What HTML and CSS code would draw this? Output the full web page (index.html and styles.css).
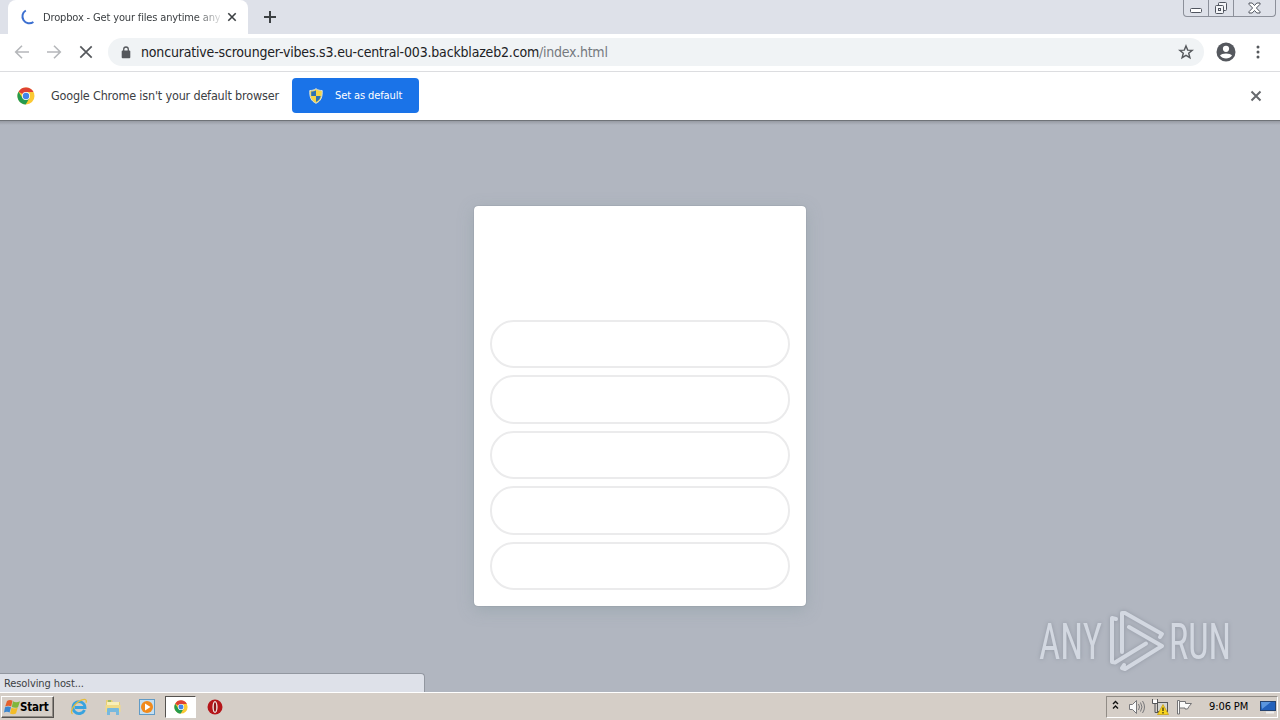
FILE: index.html
```html
<!DOCTYPE html>
<html lang="en">
<head>
  <meta charset="UTF-8" />
  <title>Dropbox - Get your files anytime anywhere</title>
  <link rel="stylesheet" href="styles.css">
</head>
<body>

  <header class="tabstrip">
    <div class="tab">
      <svg class="spinner" width="16" height="16" viewBox="0 0 16 16"><path d="M5.800 1.500A6.900 6.900 0 1 0 13.400 13" fill="none" stroke="#3b6fd0" stroke-width="2"/></svg>
      <span class="tab-title">Dropbox - Get your files anytime any</span>
      <svg width="10" height="10" viewBox="0 0 10 10"><path d="M1.3 1.3l7.4 7.4M8.7 1.3L1.3 8.7" stroke="#3c4043" stroke-width="1.6"/></svg>
    </div>
    <svg class="new-tab" width="12" height="12" viewBox="0 0 12 12"><path d="M6 0v12M0 6h12" stroke="#3c4043" stroke-width="2"/></svg>
    <div class="window-buttons">
      <span class="win min"><svg width="12" height="5" viewBox="0 0 12 5"><rect x=".5" y=".5" width="11" height="4" rx="1" fill="#fff" stroke="#50555f"/></svg></span>
      <span class="win"><svg width="14" height="14" viewBox="0 0 14 14" fill="#f4f5f8" stroke="#50555f"><rect x="4.500" y="1.500" width="8" height="8" rx="1"/><rect x="1.500" y="4.500" width="8" height="8" rx="1"/><rect x="4.500" y="7.500" width="2" height="2"/></svg></span>
      <span class="win wide"><svg width="13" height="12" viewBox="0 0 13 12"><path d="M1 1h3.200l2.300 2.500L8.800 1H12v1.300L8.400 6l3.600 3.700V11H8.800L6.500 8.500 4.200 11H1V9.700L4.600 6 1 2.300z" fill="#fff" stroke="#50555f"/></svg></span>
    </div>
  </header>

  <nav class="toolbar">
    <svg width="16" height="16" viewBox="0 0 16 16" fill="none" stroke="#b5b7ba" stroke-width="1.600"><path d="M15 8H2M8 1.700L1.700 8 8 14.300"/></svg>
    <svg width="16" height="16" viewBox="0 0 16 16" fill="none" stroke="#b5b7ba" stroke-width="1.600"><path d="M1 8h13M8 1.700L14.300 8 8 14.300"/></svg>
    <svg width="16" height="16" viewBox="0 0 16 16" stroke="#55585c" stroke-width="1.700"><path d="M2.300 2.300l11.400 11.400M13.700 2.300L2.300 13.700"/></svg>
    <div class="address">
      <svg width="10" height="13" viewBox="0 0 10 13"><rect x=".7" y="4.500" width="8.600" height="7.700" rx="1" fill="#55585c"/><path d="M2.700 5V3.300a2.300 2.300 0 0 1 4.600 0V5" fill="none" stroke="#55585c" stroke-width="1.300"/></svg>
      <span class="url">noncurative-scrounger-vibes.s3.eu-central-003.backblazeb2.com</span><span class="path">/index.html</span>
      <svg class="star" width="16" height="16" viewBox="0 0 16 16"><path d="M8 1.900l1.700 4.200 4.500.300-3.500 2.900 1.200 4.400L8 11.300l-3.900 2.400 1.200-4.400-3.500-2.900 4.500-.300z" fill="none" stroke="#55585c" stroke-width="1.400"/></svg>
    </div>
    <svg class="avatar" width="20" height="20" viewBox="0 0 20 20"><circle cx="10" cy="10" r="9.500" fill="#55585e"/><circle cx="10" cy="6.800" r="3.100" fill="#fff"/><path d="M4 13.600c1.500-2.900 10.500-2.900 12 0-2.500 4-9.500 4-12 0z" fill="#fff"/></svg>
    <svg class="dots" width="4" height="14" viewBox="0 0 4 14" fill="#55585c"><circle cx="2" cy="2" r="1.500"/><circle cx="2" cy="7" r="1.500"/><circle cx="2" cy="12" r="1.500"/></svg>
  </nav>

  <div class="infobar">
    <svg width="18" height="18" viewBox="0 0 18 18">
      <circle cx="9" cy="9" r="8.500" fill="#fbc934"/>
      <path d="M9 9L1.500 4.800A8.500 8.500 0 0 1 16.500 5H9z" fill="#de4134"/>
      <path d="M1.500 4.800A8.500 8.500 0 0 0 8.700 17.500L12.500 11 5.500 11z" fill="#259b4e"/>
      <circle cx="9" cy="9" r="4" fill="#fff"/><circle cx="9" cy="9" r="3.200" fill="#4285ea"/>
    </svg>
    <span class="info-text">Google Chrome isn't your default browser</span>
    <button class="default-btn">
      <svg width="14" height="16" viewBox="0 0 14 16"><path d="M7 .7C5 2.200 3 2.500.8 2.500.500 9 2 13 7 15.300 12 13 13.500 9 13.200 2.500 11 2.500 9 2.200 7 .7z" fill="#f4d548" stroke="#d9e0dc"/><path d="M7 2.200C5.500 3.200 4 3.500 2.200 3.600V8H7zM7 8h4.700C11.300 10.600 10 12.600 7 14z" fill="#2c72b5"/></svg>
      <span>Set as default</span>
    </button>
    <svg class="close" width="12" height="12" viewBox="0 0 12 12"><path d="M1.500 1.500l9 9M10.500 1.500l-9 9" stroke="#66696d" stroke-width="2"/></svg>
  </div>

  <main class="page">
    <div class="card">
      <div class="option"></div>
      <div class="option"></div>
      <div class="option"></div>
      <div class="option"></div>
      <div class="option"></div>
    </div>
    <div class="status">Resolving host...</div>
    <svg class="watermark" width="200" height="66" viewBox="0 0 200 66">
      <text x="3" y="51" textLength="63" lengthAdjust="spacingAndGlyphs">ANY</text>
      <g fill="none" stroke="#d3d8e1" stroke-width="4" stroke-linejoin="round" stroke-linecap="round">
        <path d="M80 11L76 10V54L79 54.500 110 35.500"/>
        <path d="M86 44V5L89 5 126 26 124 29"/>
        <path d="M93 19L126 38 89 61 86 60 88 57"/>
      </g>
      <text x="133" y="51" textLength="62" lengthAdjust="spacingAndGlyphs">RUN</text>
    </svg>
  </main>

  <footer class="taskbar">
    <button class="start">
      <svg width="16" height="16" viewBox="0 0 16 16"><path d="M3 2Q6 0 8.500 1.800L7.200 7.500Q4.500 6 1.200 7.500z" fill="#e4602c"/><path d="M9 2.300q3 1.700 7 0l-2 6Q11 9.500 7.800 8z" fill="#80b63c"/><path d="M1 8.200q3-1.500 6 0l-1.400 5.300Q3 12 0 13.500z" fill="#3b86cf"/><path d="M7.500 8.700q3 1.500 6.200 0L12 14.500q-3 1.500-6 0z" fill="#f3bc28"/></svg>
      <span>Start</span>
    </button>
    <div class="task">
      <svg width="18" height="18" viewBox="0 0 18 18" fill="none"><path d="M14.500 12A6 6 0 1 1 15 9.500H5" stroke="#38a3df" stroke-width="2.800"/><path d="M2.500 16C-1 14 5 4 12 1.800c4-1.300 5 .500 4 3" stroke="#e5bd3c" stroke-width="1.300"/></svg>
    </div>
    <div class="task">
      <svg width="18" height="18" viewBox="0 0 18 18"><path d="M2 2h6l1 2h7v10H2z" fill="#e9cf74"/><path d="M3 4h12v5H3z" fill="#f9efb7"/><path d="M1.500 7h15v7h-15z" fill="#f0db88"/><path d="M3 17v-6q0-1 1-1h10q1 0 1 1v6h-3v-3H6v3z" fill="#77b9de"/><path d="M4 3h3" stroke="#55a65b"/></svg>
    </div>
    <div class="task">
      <svg width="18" height="18" viewBox="0 0 18 18"><rect x="1.500" y="1.500" width="15" height="15" fill="#c4dff2" stroke="#619bc6"/><circle cx="9" cy="9" r="6" fill="#f18a1c"/><path d="M7 5.500v7L12.500 9z" fill="#fff"/></svg>
    </div>
    <div class="task active">
      <svg width="14" height="14" viewBox="0 0 18 18">
        <circle cx="9" cy="9" r="8.500" fill="#fbc934"/>
        <path d="M9 9L1.500 4.800A8.500 8.500 0 0 1 16.500 5H9z" fill="#de4134"/>
        <path d="M1.500 4.800A8.500 8.500 0 0 0 8.700 17.500L12.500 11 5.500 11z" fill="#259b4e"/>
        <circle cx="9" cy="9" r="4" fill="#fff"/><circle cx="9" cy="9" r="3.200" fill="#4285ea"/>
      </svg>
    </div>
    <div class="task">
      <svg width="16" height="16" viewBox="0 0 16 16"><circle cx="8" cy="8" r="7.500" fill="#b51519"/><ellipse cx="8" cy="8" rx="2.600" ry="6" fill="#f0e5e2"/><ellipse cx="8" cy="8" rx="1.200" ry="4.700" fill="#8e1517"/></svg>
    </div>
    <div class="tray">
      <svg class="chevrons" width="7" height="10" viewBox="0 0 7 10" fill="none" stroke="#111" stroke-width="1.400"><path d="M1 4l2.500-2.500L6 4M1 8.500L3.500 6 6 8.500"/></svg>
      <svg class="sound" width="18" height="16" viewBox="0 0 18 16" fill="none" stroke="#77777a"><path d="M1.500 5.500h3l4-4v13l-4-4h-3z" fill="#fafafa"/><path d="M10.500 5q2 3 0 6M12.500 3.500q3 4.500 0 9M14.500 2q4 6 0 12"/></svg>
      <svg class="net" width="17" height="16" viewBox="0 0 17 16"><rect x="5.500" y="3.500" width="10" height="9" fill="#d4d5d1" stroke="#55575a"/><path d="M.5 0v4.500h5V0M3 4.500v9h5" fill="none" stroke="#55575a"/><path d="M1 1h4v3H1z" fill="#fff"/><path d="M11 5.500l5.500 10h-11z" fill="#f8d51e" stroke="#c59b0a" stroke-width=".7"/><path d="M11 8.500v3.500M11 13v1.500" stroke="#3a3515" stroke-width="1.300"/></svg>
      <svg class="flag" width="17" height="16" viewBox="0 0 17 16"><path d="M1.500 1.500h2V15h-2z" fill="#fbfbfa" stroke="#747476"/><path d="M3.500 2.500h6v2h6L13 7.500l-1.500 2.500H9V9H3.500z" fill="#fbfbfa" stroke="#747476"/></svg>
      <span class="clock">9:06 PM</span>
      <svg class="desktop" width="16" height="14" viewBox="0 0 16 14"><rect x=".5" y="1.500" width="15" height="9" fill="#2361bb" stroke="#25436f"/><path d="M1 2h10L2 9z" fill="#5b96de"/><path d="M6 12.500h8" stroke="#eee" stroke-width="2"/></svg>
    </div>
  </footer>

</body>
</html>
```
FILE: styles.css
```css
* {
  box-sizing: border-box;
}
body {
  margin: 0;
  width: 1280px;
  height: 720px;
  overflow: hidden;
  display: flex;
  flex-direction: column;
  font-family: "DejaVu Sans Condensed", "DejaVu Sans", sans-serif;
  font-stretch: condensed;
  font-size: 11px;
  color: #3c4043;
  background: #fff;
}
svg {
  display: block;
  flex: none;
}
button {
  font: inherit;
  border: 0;
}
.tabstrip {
  height: 34px;
  flex: none;
  display: flex;
  background: #dee1e9;
  padding-left: 8px;
}
.tab {
  width: 240px;
  height: 34px;
  padding: 0 11px 0 12px;
  display: flex;
  align-items: center;
  background: #fff;
  border-radius: 8px 8px 0 0;
}
.tab-title {
  width: 177px;
  margin: 0 7px;
  white-space: nowrap;
  letter-spacing: -0.15px;
  -webkit-mask-image: linear-gradient(to right, #000 152px, transparent 182px);
  mask-image: linear-gradient(to right, #000 152px, transparent 182px);
}
.new-tab {
  margin: 11px 0 0 16px;
}
.window-buttons {
  display: flex;
  height: 17px;
  margin: 0 4px 0 auto;
  border: 1px solid #8c909a;
  border-top: 0;
  border-radius: 0 0 4px 4px;
}
.win {
  width: 25px;
  display: flex;
  align-items: center;
  justify-content: center;
}
.win + .win {
  border-left: 1px solid #8c909a;
}
.win.min {
  width: 24px;
  padding-top: 4px;
}
.win.wide {
  width: 42px;
}
.toolbar {
  height: 38px;
  flex: none;
  display: flex;
  align-items: center;
  gap: 16px;
  padding: 0 19px 1px 14px;
  border-bottom: 1px solid #dcdde0;
}
.address {
  width: 1096px;
  height: 28px;
  margin-left: -2px;
  padding: 0 10px 0 13px;
  display: flex;
  align-items: center;
  border-radius: 14px;
  background: #f0f3f5;
  font-size: 14px;
}
.url {
  margin-left: 10px;
  color: #202124;
  letter-spacing: -0.18px;
}
.path {
  color: #75797e;
  letter-spacing: -0.25px;
}
.star {
  margin-left: auto;
}
.avatar {
  margin-left: -4px;
}
.dots {
  margin-left: 4px;
}
.infobar {
  height: 48px;
  flex: none;
  display: flex;
  align-items: center;
  padding: 0 18px 1px 17px;
}
.info-text {
  width: 229px;
  margin: 0 12px 0 16px;
  white-space: nowrap;
  font-size: 12.5px;
  letter-spacing: -0.18px;
}
.default-btn {
  width: 127px;
  height: 35px;
  padding: 0 0 0 17px;
  display: flex;
  align-items: center;
  gap: 12px;
  border-radius: 4px;
  background: #1a73e8;
  color: #fff;
  white-space: nowrap;
  letter-spacing: -0.1px;
}
.close {
  margin-left: auto;
}
.page {
  flex: 1;
  position: relative;
  display: flex;
  justify-content: center;
  align-items: flex-start;
  padding-top: 86px;
  background: linear-gradient(#6f7378 1px, #969aa2 1px, #b1b6c0 5px);
}
.card {
  width: 332px;
  height: 400px;
  padding: 114px 16px 16px;
  display: flex;
  flex-direction: column;
  gap: 7px;
  border-radius: 4px;
  background: #fff;
  box-shadow: 0 0 1px rgba(50, 65, 75, .6), 0 4px 16px rgba(120, 145, 150, .35);
}
.option {
  height: 48.4px;
  border: 2px solid #ebebec;
  border-radius: 24px;
}
/* loading bubble over the page */
.status {
  position: absolute;
  left: 0;
  bottom: 0;
  width: 425px;
  height: 19px;
  padding: 2px 4px;
  line-height: 15px;
  letter-spacing: -0.1px;
  border: 1px solid #9297a0;
  border-width: 1px 1px 0 0;
  border-radius: 0 4px 0 0;
  background: #dee1e9;
}
.watermark {
  position: absolute;
  left: 1036px;
  top: 488px;
  filter: drop-shadow(0 0 2px #9298a3);
}
.watermark text {
  font-family: Roboto, sans-serif;
  font-size: 50px;
  font-weight: 400;
  fill: #d3d8e1;
}
.taskbar {
  height: 28px;
  flex: none;
  display: flex;
  align-items: center;
  padding: 2px 2px 2px 1px;
  background: #d5cec7;
  border-top: 1px solid #fff;
}
.start {
  width: 53px;
  height: 22px;
  padding: 0 0 0 2px;
  margin-right: 9px;
  display: flex;
  align-items: center;
  border: 1px solid;
  border-color: #fff #55524f #55524f #fff;
  box-shadow: inset -1px -1px #918c86;
  background: #d5cec7;
  color: #000;
  font-size: 11.5px;
  font-weight: bold;
  letter-spacing: -0.2px;
}
.task {
  width: 31px;
  height: 22px;
  margin-right: 3px;
  display: flex;
  align-items: center;
  justify-content: center;
}
.active {
  border: 1px solid;
  border-color: #55524f #fff #fff #55524f;
  background: #fff;
}
.tray {
  width: 172px;
  height: 22px;
  margin-left: auto;
  padding-left: 5px;
  display: flex;
  align-items: center;
  border: 1px solid;
  border-color: #918c86 #fff #fff #918c86;
  color: #000;
}
.chevrons {
  margin-bottom: 3px;
}
.sound {
  margin-left: 9px;
}
.net {
  margin-left: 6px;
}
.flag {
  margin-left: 7px;
}
.clock {
  width: 42px;
  margin-left: 16px;
  white-space: nowrap;
  letter-spacing: -0.1px;
}
.desktop {
  margin-left: 9px;
}
```
